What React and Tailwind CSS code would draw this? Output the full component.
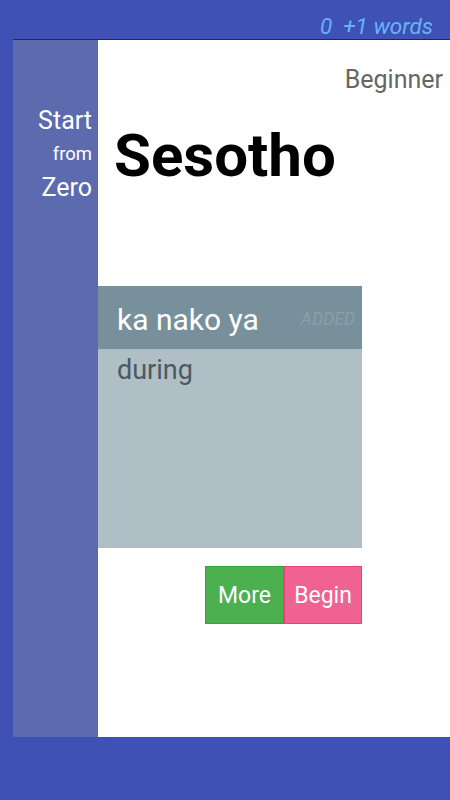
export default function App() {
  return (
    <div className="w-[450px] h-[800px] bg-[#3f51b5] flex flex-col" style={{ fontFamily: "Roboto, sans-serif" }}>
      <div className="h-[39px] flex items-center justify-end pr-[17px] pt-[13px]">
        <span className="italic text-[22.5px] text-[#64b5f6] leading-none">0&nbsp;&nbsp;+1 words</span>
      </div>
      <div className="flex ml-[13px] h-[698px] border-t border-[#1a237e]">
        <div className="w-[85px] bg-[#5c6bae] flex flex-col items-end pr-[6px] pt-[66px] text-white">
          <div className="text-[25px] leading-[30px]">Start</div>
          <div className="text-[18.5px] leading-[36px]">from</div>
          <div className="text-[25px] leading-[32px]">Zero</div>
        </div>
        <div className="flex-1 bg-white flex flex-col">
          <div className="flex justify-end pr-[7px] pt-[26px]">
            <span className="text-[25px] leading-[28px] text-[#666666]">Beginner</span>
          </div>
          <div className="pl-[16px] pt-[27px]">
            <span className="text-[60px] font-bold leading-[70px] text-black">Sesotho</span>
          </div>
          <div className="mt-[95px] w-[264px] h-[262px] flex flex-col bg-[#b0bec5]">
            <div className="h-[63px] bg-[#78909c] flex items-center justify-between pl-[19px] pr-[7px] pt-[3px]">
              <span className="text-[30px] text-white">ka nako ya</span>
              <span className="italic text-[17.5px] text-[#8e9ea6]">ADDED</span>
            </div>
            <div className="pl-[19px] pt-[4px] text-[27px] leading-[34px] text-[#4a5a62]">during</div>
          </div>
          <div className="mt-[18px] ml-[107px] flex h-[58px]">
            <div className="w-[79px] bg-[#4caf50] border border-[#2eaa3a] flex items-center justify-center pt-[3px] text-white text-[23px]">More</div>
            <div className="w-[78px] bg-[#f06292] border border-[#ec407a] flex items-center justify-center pt-[3px] text-white text-[23px]">Begin</div>
          </div>
        </div>
      </div>
    </div>
  );
}
